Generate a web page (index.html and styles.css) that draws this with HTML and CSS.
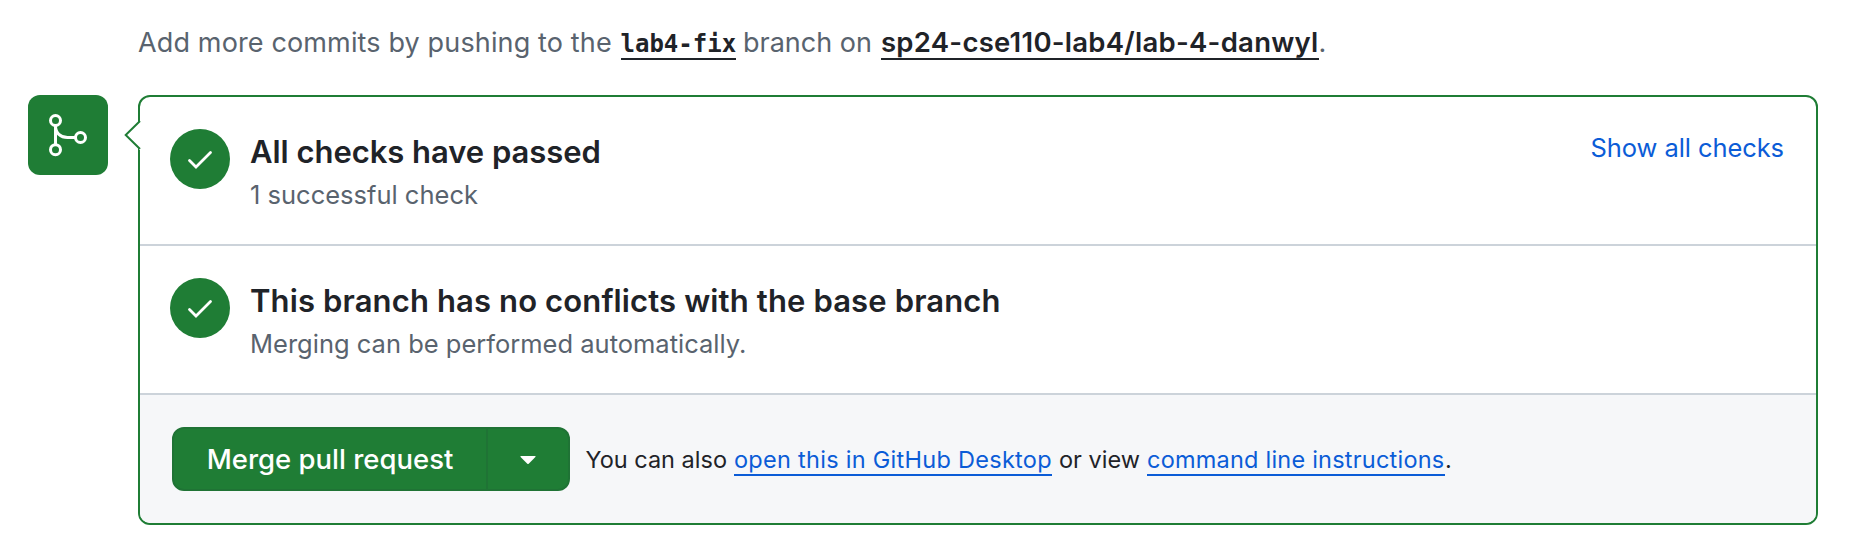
FILE: index.html
```html
<!DOCTYPE html>
<html lang="en">
<head>
<meta charset="utf-8">
<title>Merge pull request</title>
<link rel="stylesheet" href="styles.css">
</head>
<body>
<p class="push-hint"><span class="hint-lead">Add more commits by pushing to the</span><a class="branch-name">lab4-fix</a><span class="hint-mid">branch on</span><a class="repo-name">sp24-cse110-lab4/lab-4-danwyl</a><span class="hint-end">.</span></p>
<main class="merge">
  <div class="badge">
    <svg class="badge-icon" viewBox="0 0 80 80" fill="none" stroke="#fff" stroke-width="3">
      <circle cx="27.5" cy="25.5" r="5"/><circle cx="27.5" cy="54.7" r="5"/><circle cx="52.5" cy="42.5" r="5"/>
      <path d="M27.5 30.5v19M27.5 31c0 7 5 11.500 12 11.500h8"/>
    </svg>
  </div>
  <section class="box">
    <svg class="caret" viewBox="0 0 17 30"><path d="M17 0v30h-2v-1.500L1.500 15 15 1.500z" fill="#fff"/><path d="M16 1 1.700 15 16 29" fill="none" stroke="#1f7d35" stroke-width="2"/></svg>
    <div class="row">
      <span class="status"><svg viewBox="0 0 60 60"><path d="M19.500 31.500 26 38 40.500 23.500" fill="none" stroke="#fff" stroke-width="2.800" stroke-linecap="round"/></svg></span>
      <div class="row-text">
        <h3 class="title"><span class="title-checks">All checks have passed</span></h3>
        <p class="sub"><span class="sub-checks">1 successful check</span></p>
      </div>
      <a class="show-all">Show all checks</a>
    </div>
    <div class="row">
      <span class="status"><svg viewBox="0 0 60 60"><path d="M19.500 31.500 26 38 40.500 23.500" fill="none" stroke="#fff" stroke-width="2.800" stroke-linecap="round"/></svg></span>
      <div class="row-text">
        <h3 class="title"><span class="title-branch">This branch has no conflicts with the base branch</span></h3>
        <p class="sub"><span class="sub-branch">Merging can be performed automatically.</span></p>
      </div>
    </div>
    <footer class="actions">
      <div class="button-group">
        <button class="merge-button"><span>Merge pull request</span></button>
        <button class="menu-button" aria-label="Select merge method"><svg viewBox="0 0 16 8"><path d="M1 0h14q1 .3.400 1L8.700 7.700q-.7.600-1.400 0L.6 1Q0 .3 1 0z" fill="#fff"/></svg></button>
      </div>
      <p class="help"><span class="help-lead">You can also</span><a class="desktop-link">open this in GitHub Desktop</a><span class="help-mid">or view</span><a class="cli-link">command line instructions</a><span>.</span></p>
    </footer>
  </section>
</main>
</body>
</html>
```
FILE: styles.css
```css
* { box-sizing: border-box; }
body { margin: 0; padding: 24px 36px 0 28px; background: #fff; color: #1f2328; font-family: Inter, "Liberation Sans", sans-serif; }
h3, p { margin: 0; white-space: nowrap; }
.push-hint { display: flex; align-items: flex-start; height: 36px; margin-left: 110px; font-size: 27px; line-height: 38px; color: #59636e; }
.hint-lead { flex: none; width: 482.500px; letter-spacing: .14px; }
.branch-name { width: 115.500px; height: 36px; font: bold 24px/40px "DejaVu Sans Mono", monospace; color: #1f2328; border-bottom: 2px solid #1f2328; }
.hint-mid { flex: none; width: 145px; padding-left: 7px; }
.repo-name { width: 437.500px; height: 36px; font-size: 27.500px; line-height: 36px; font-weight: 600; letter-spacing: .26px; color: #1f2328; border-bottom: 2px solid #1f2328; }
.merge { display: flex; gap: 30px; margin-top: 35px; }
.badge { width: 80px; height: 80px; border-radius: 12px; background: #1f7d35; flex: none; }
.badge-icon { display: block; width: 80px; height: 80px; }
.box { position: relative; flex: 1; height: 430px; border: 2px solid #1f7d35; border-radius: 12px; }
.caret { position: absolute; left: -16px; top: 23px; width: 17px; height: 30px; }
.row { display: flex; height: 149px; padding: 32px 32px 0 30px; border-bottom: 2px solid #ccd3da; }
.status { width: 60px; height: 60px; border-radius: 50%; background: #1f7d35; flex: none; }
.status svg { display: block; width: 60px; height: 60px; }
.row-text { flex: 1; padding: 2px 0 0 20px; }
.title { font-size: 31px; line-height: 42px; font-weight: 600; }
.title-checks { letter-spacing: -.04px; }
.title-branch { letter-spacing: .13px; }
.sub { font-size: 25.500px; line-height: 40px; padding-top: 2px; color: #59636e; }
.show-all { font-size: 25.500px; line-height: 38px; letter-spacing: -.08px; color: #0b5cd7; }
.actions { display: flex; align-items: center; height: 128px; padding: 0 32px; background: #f6f7f9; border-radius: 0 0 10px 10px; }
.button-group { display: flex; width: 398px; height: 64px; }
button { margin: 0; padding: 0; border: 2px solid #1f7335; background: #1f7d35; color: #fff; font: 500 27.500px/36px Inter, "Liberation Sans", sans-serif; }
.merge-button { width: 316px; border-radius: 12px 0 0 12px; }
.menu-button { display: flex; align-items: center; justify-content: center; width: 82px; border-left: 0; border-radius: 0 12px 12px 0; }
.menu-button svg { width: 16px; height: 8px; margin-top: 2px; }
.help { display: flex; height: 36px; padding-left: 15.500px; font-size: 23.500px; line-height: 38px; }
.help-lead { width: 148.500px; }
.help-mid { width: 95px; padding-left: 7px; }
.help a { height: 35px; color: #0b5cd7; border-bottom: 2px solid #0b5cd7; }
.desktop-link { width: 318px; letter-spacing: .28px; }
.cli-link { width: 298px; letter-spacing: .22px; }
```
